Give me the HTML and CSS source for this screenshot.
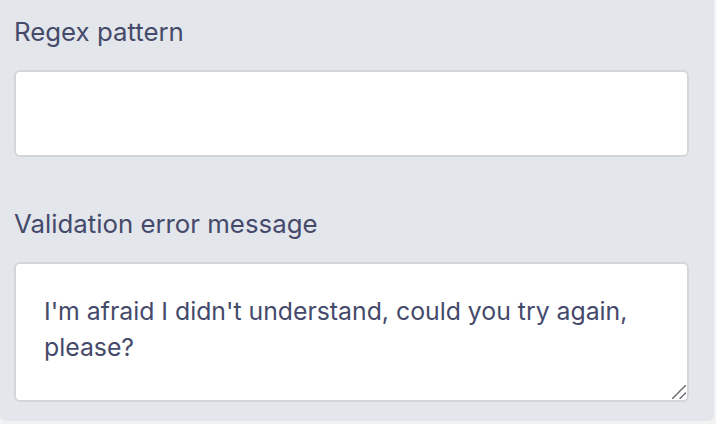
FILE: index.html
```
<!DOCTYPE html>
<html>
<head>
<meta charset="utf-8">
<link rel="stylesheet" href="styles.css">
</head>
<body>
<div class="panel">
  <label class="field-label" for="regex">Regex pattern</label>
  <input class="field-input" id="regex" type="text">
  <label class="field-label" for="msg">Validation error message</label>
  <div class="textarea-wrap">
    <textarea class="field-textarea" id="msg">I'm afraid I didn't understand, could you try again, please?</textarea>
    <svg class="grip" width="14" height="14" viewBox="0 0 14 14" aria-hidden="true">
      <line x1="0.5" y1="13.5" x2="13.5" y2="0.5" stroke="#6e6e72" stroke-width="1.5" stroke-linecap="round"/>
      <line x1="8" y1="13.5" x2="13.5" y2="8" stroke="#6e6e72" stroke-width="1.5" stroke-linecap="round"/>
    </svg>
  </div>
</div>
</body>
</html>
```
FILE: styles.css
```
html, body {
  margin: 0;
  padding: 0;
  background: #f1f2f4;
}
.panel {
  width: 714px;
  box-sizing: border-box;
  background: #e3e6ea;
  border-radius: 0 0 6px 6px;
  padding: 16px 25px 19px 14px;
  display: flex;
  flex-direction: column;
  color: #454a6b;
  font-family: "Inter", "Noto Sans", sans-serif;
}
.field-label {
  display: block;
  font-size: 25.8px;
  line-height: 32px;
  margin-bottom: 22px;
}
.field-input,
.field-textarea {
  display: block;
  box-sizing: border-box;
  width: 675px;
  border: 2px solid #d2d5da;
  border-radius: 6px;
  background: #fff;
  color: #454a6b;
  font-family: "Inter", "Noto Sans", sans-serif;
  font-size: 24.8px;
  outline: none;
  margin: 0;
}
.field-input {
  height: 87px;
  padding: 0 28px;
  margin-bottom: 51px;
}
.textarea-wrap {
  position: relative;
  width: 675px;
}
.field-textarea {
  height: 140px;
  padding: 29px 28px;
  line-height: 36px;
  resize: none;
}
.grip {
  position: absolute;
  right: 3px;
  bottom: 3px;
}
```
